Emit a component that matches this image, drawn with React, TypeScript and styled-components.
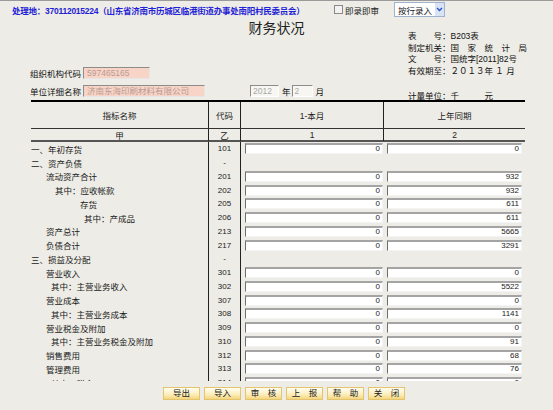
import styled, { createGlobalStyle } from "styled-components";

const GlobalStyle = createGlobalStyle`
  html, body {
    margin: 0;
    padding: 0;
    background: #edece6;
  }
`;

const Page = styled.div`
  width: 553px;
  height: 410px;
  overflow: hidden;
  box-sizing: border-box;
  border-top: 1px solid #9a9a9a;
  background: #edece6;
  font-family: "Liberation Sans", "Noto Sans CJK SC", sans-serif;
  font-size: 8.5px;
  color: #111;
`;

const TopBar = styled.div`
  display: flex;
  align-items: center;
  height: 17px;
  padding-left: 12px;
`;

const Location = styled.div`
  width: 322px;
  color: #1f22d6;
  font-weight: bold;
  letter-spacing: -0.25px;
  white-space: nowrap;
`;

const CheckLabel = styled.label`
  display: flex;
  align-items: center;
  gap: 2px;
  width: 60px;
  color: #222;
`;

const CheckBox = styled.span`
  width: 7px;
  height: 7px;
  border: 1px solid #8a8a8a;
  background: #f2f2f2;
`;

const Select = styled.div`
  display: flex;
  align-items: center;
  justify-content: space-between;
  width: 51px;
  height: 15px;
  box-sizing: border-box;
  border: 1px solid #9fb3cf;
  background: #fff;
  padding-left: 3px;
  color: #222;
`;

const SelectArrow = styled.span`
  display: flex;
  align-items: center;
  justify-content: center;
  width: 9px;
  height: 13px;
  background: #d8e3f5;
`;

const Title = styled.div`
  margin: 1px 0 -4px;
  height: 16px;
  line-height: 16px;
  text-align: center;
  font-family: "Noto Sans CJK SC", sans-serif;
  font-size: 14px;
  color: #222;
`;

const HeaderBody = styled.div`
  display: flex;
  height: 69px;
`;

const Fields = styled.div`
  width: 408px;
  box-sizing: border-box;
  padding: 0 0 3px 30px;
  display: flex;
  flex-direction: column;
  justify-content: flex-end;
  gap: 5px;
`;

const FieldRow = styled.div`
  display: flex;
  align-items: center;
  height: 13px;
`;

const FieldLabel = styled.span`
  width: 53px;
  white-space: nowrap;
`;

const PinkInput = styled.div<{ $w: number }>`
  width: ${(p) => p.$w}px;
  height: 12px;
  box-sizing: border-box;
  border-top: 1px solid #8c8c8c;
  border-left: 1px solid #8c8c8c;
  border-right: 1px solid #e6e6e6;
  border-bottom: 1px solid #e6e6e6;
  background: #f8d4c6;
  color: #b89a94;
  padding-left: 3px;
  line-height: 10px;
  white-space: nowrap;
  overflow: hidden;
`;

const DateInput = styled.div<{ $w: number; $ml: number }>`
  width: ${(p) => p.$w}px;
  margin-left: ${(p) => p.$ml}px;
  height: 12px;
  box-sizing: border-box;
  border-top: 1px solid #8c8c8c;
  border-left: 1px solid #8c8c8c;
  border-right: 1px solid #fff;
  border-bottom: 1px solid #fff;
  background: #f7f6f2;
  color: #a8a8a8;
  padding-left: 2px;
  line-height: 10px;
`;

const Unit = styled.span`
  margin-left: 3px;
  margin-right: 1px;
`;

const Meta = styled.div`
  display: flex;
  flex-direction: column;
  width: 145px;
`;

const MetaLine = styled.div`
  height: 11.7px;
  line-height: 11.7px;
  white-space: nowrap;
`;

const MeasureLine = styled.div`
  margin-top: auto;
  margin-bottom: -2px;
  height: 11px;
  line-height: 11px;
  white-space: nowrap;
`;

const Table = styled.div`
  margin-left: 31px;
  width: 494px;
`;

const Grid = styled.div`
  display: grid;
  grid-template-columns: 178px 32px 143px 141px;
`;

const HeadRow = styled(Grid)<{ $h: number; $line: string }>`
  height: ${(p) => p.$h}px;
  box-sizing: border-box;
  border-bottom: ${(p) => p.$line};
`;

const HeadTop = styled.div`
  border-top: 2px solid #000;
`;

const HeadCell = styled.div<{ $last?: boolean }>`
  display: flex;
  align-items: center;
  justify-content: center;
  border-right: ${(p) => (p.$last ? "none" : "1px solid #222")};
  color: #222;
`;

const Body = styled.div`
  height: 239px;
  overflow: hidden;
`;

const DataRow = styled(Grid)`
  height: 13.75px;
`;

const NameCell = styled.div<{ $indent: number }>`
  display: flex;
  align-items: center;
  padding-left: ${(p) => p.$indent}px;
  border-right: 1px solid #222;
  white-space: nowrap;
  color: #1a1a1a;
`;

const CodeCell = styled.div`
  display: flex;
  align-items: center;
  justify-content: center;
  border-right: 1px solid #222;
  font-size: 8px;
  color: #222;
`;

const ValueCell = styled.div<{ $ml: number }>`
  display: flex;
  align-items: center;
  padding-left: ${(p) => p.$ml}px;
`;

const ValueInput = styled.div<{ $w: number }>`
  width: ${(p) => p.$w}px;
  height: 11px;
  box-sizing: border-box;
  border-top: 2px solid #a4a4a4;
  border-left: 1px solid #6e6e6e;
  border-right: 1px solid #f4f4f4;
  border-bottom: 1px solid #f4f4f4;
  background: #fff;
  text-align: right;
  padding-right: 2px;
  font-size: 8px;
  line-height: 8px;
  color: #222;
`;

const Buttons = styled.div`
  display: flex;
  gap: 4px;
  padding: 6px 0 0 163px;
`;

const Button = styled.button`
  width: 37px;
  height: 13px;
  padding: 0;
  box-sizing: border-box;
  border: 1px solid #e4c46c;
  background: linear-gradient(180deg, #fffdf0 0%, #fcefbf 55%, #f4d67e 100%);
  font-family: "Liberation Sans", "Noto Sans CJK SC", sans-serif;
  font-size: 8.5px;
  line-height: 11px;
  color: #222;
`;

type Row = { name: string; code: string; indent: number; a?: string; b?: string };

const rows: Row[] = [
  { name: "一、年初存货", code: "101", indent: 0, a: "0", b: "0" },
  { name: "二、资产负债", code: "-", indent: 0 },
  { name: "流动资产合计", code: "201", indent: 15, a: "0", b: "932" },
  { name: "其中：应收帐款", code: "202", indent: 24, a: "0", b: "932" },
  { name: "存货", code: "205", indent: 49, a: "0", b: "611" },
  { name: "其中：产成品", code: "206", indent: 53, a: "0", b: "611" },
  { name: "资产总计", code: "213", indent: 15, a: "0", b: "5665" },
  { name: "负债合计", code: "217", indent: 15, a: "0", b: "3291" },
  { name: "三、损益及分配", code: "-", indent: 0 },
  { name: "营业收入", code: "301", indent: 15, a: "0", b: "0" },
  { name: "其中：主营业务收入", code: "302", indent: 20, a: "0", b: "5522" },
  { name: "营业成本", code: "307", indent: 15, a: "0", b: "0" },
  { name: "其中：主营业务成本", code: "308", indent: 20, a: "0", b: "1141" },
  { name: "营业税金及附加", code: "309", indent: 15, a: "0", b: "0" },
  { name: "其中：主营业务税金及附加", code: "310", indent: 20, a: "0", b: "91" },
  { name: "销售费用", code: "312", indent: 15, a: "0", b: "68" },
  { name: "管理费用", code: "313", indent: 15, a: "0", b: "76" },
  { name: "其中：税金", code: "314", indent: 20, a: "0", b: "0" },
];

const actions = ["导出", "导入", "审　核", "上　报", "帮　助", "关　闭"];

export default function App() {
  return (
    <>
      <GlobalStyle />
      <Page>
        <TopBar>
          <Location>处理地：370112015224（山东省济南市历城区临港街道办事处南阳村民委员会）</Location>
          <CheckLabel>
            <CheckBox />
            即录即审
          </CheckLabel>
          <Select>
            按行录入
            <SelectArrow>
              <svg width="7" height="5" viewBox="0 0 7 5">
                <path d="M1 1l2.5 2.5L6 1" fill="none" stroke="#2b52c8" strokeWidth="1.4" />
              </svg>
            </SelectArrow>
          </Select>
        </TopBar>

        <Title>财务状况</Title>

        <HeaderBody>
          <Fields>
            <FieldRow>
              <FieldLabel>组织机构代码</FieldLabel>
              <PinkInput $w={67}>597465165</PinkInput>
            </FieldRow>
            <FieldRow>
              <FieldLabel>单位详细名称</FieldLabel>
              <PinkInput $w={122}>济南东海印刷材料有限公司</PinkInput>
              <DateInput $w={29} $ml={45}>2012</DateInput>
              <Unit>年</Unit>
              <DateInput $w={21} $ml={0}>2</DateInput>
              <Unit>月</Unit>
            </FieldRow>
          </Fields>
          <Meta>
            <MetaLine>表　　号：B203表</MetaLine>
            <MetaLine>制定机关：国　家　统　计　局</MetaLine>
            <MetaLine>文　　号：国统字[2011]82号</MetaLine>
            <MetaLine>有效期至：２０１３年 １ 月</MetaLine>
            <MeasureLine>计量单位：千　　　元</MeasureLine>
          </Meta>
        </HeaderBody>

        <Table>
          <HeadTop>
            <HeadRow $h={27} $line="1px solid #333">
              <HeadCell>指标名称</HeadCell>
              <HeadCell>代码</HeadCell>
              <HeadCell>1-本月</HeadCell>
              <HeadCell $last>上年同期</HeadCell>
            </HeadRow>
            <HeadRow $h={13} $line="2px solid #555">
              <HeadCell>甲</HeadCell>
              <HeadCell>乙</HeadCell>
              <HeadCell>1</HeadCell>
              <HeadCell $last>2</HeadCell>
            </HeadRow>
          </HeadTop>
          <Body>
            {rows.map((r) => (
              <DataRow key={r.name}>
                <NameCell $indent={r.indent}>{r.name}</NameCell>
                <CodeCell>{r.code}</CodeCell>
                <ValueCell $ml={4}>
                  {r.a !== undefined && <ValueInput $w={138}>{r.a}</ValueInput>}
                </ValueCell>
                <ValueCell $ml={3}>
                  {r.b !== undefined && <ValueInput $w={135}>{r.b}</ValueInput>}
                </ValueCell>
              </DataRow>
            ))}
          </Body>
        </Table>

        <Buttons>
          {actions.map((a) => (
            <Button key={a}>{a}</Button>
          ))}
        </Buttons>
      </Page>
    </>
  );
}
